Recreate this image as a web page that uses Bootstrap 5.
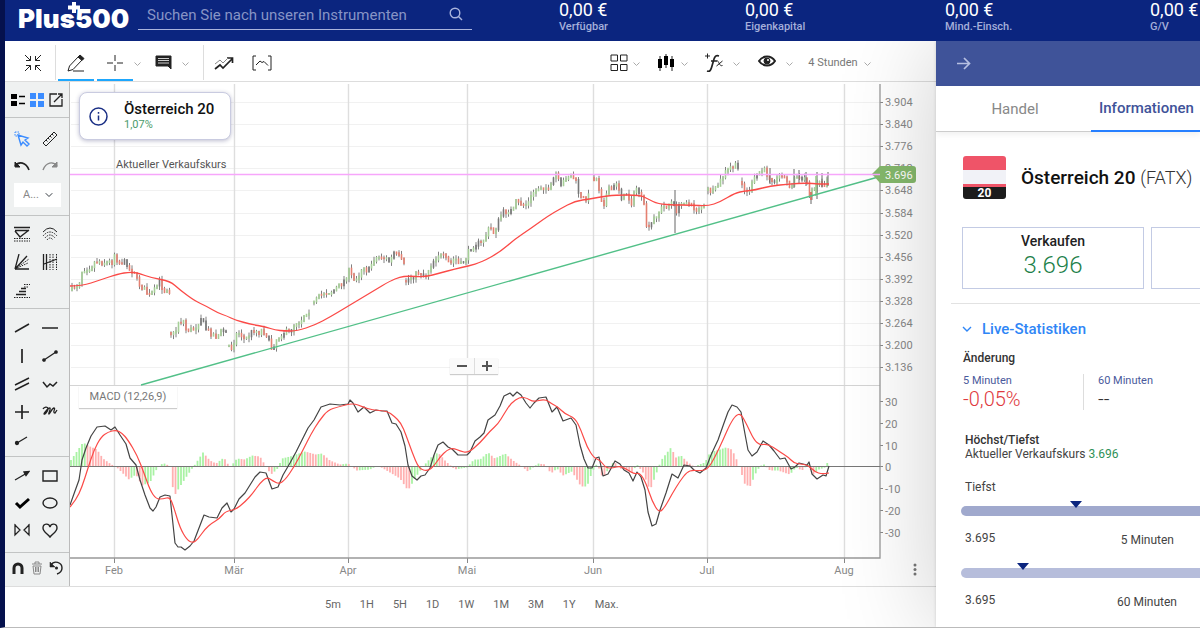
<!DOCTYPE html>
<html lang="de">
<head>
<meta charset="utf-8">
<meta name="viewport" content="width=device-width, initial-scale=1">
<title>Plus500 – Österreich 20</title>
<link href="https://cdn.jsdelivr.net/npm/bootstrap@5.3.0/dist/css/bootstrap.min.css" rel="stylesheet">
<style>
body{font-family:Roboto,"Liberation Sans",sans-serif;font-size:12px;line-height:16px;color:#444;background:#fff}
button,select,input{font-family:inherit}
.shell{border-left:5px solid #05114d;border-bottom:1px solid #bbb;min-height:100vh;overflow:hidden}
.topbar{background:#0b257f;height:41px}
.logo{width:133px;padding-left:13px;color:#fff;font:900 26px/38px Inter,Roboto,sans-serif;text-decoration:none;position:relative}
.logo svg{position:absolute;left:62px;top:2px}
.finder{flex:0 0 334px;height:30px;border-bottom:1px solid #aab4dd}
.finder input{background:none;border:0;outline:0;color:#fff;font-size:15px;padding:0 0 0 9px;height:30px;min-width:0}
.finder input::placeholder{color:#8794c6;opacity:1}
.finder button{width:33px;height:28px;color:#aab4dd}
.funds{display:grid;grid-template-columns:186fr 200fr 205fr 50fr;padding-left:87px;white-space:nowrap;overflow:hidden}
.funds strong{display:block;font-weight:400;font-size:18px;line-height:19px;color:#fff}
.funds span{display:block;font-size:11px;font-weight:500;line-height:15px;color:#a5afda}
.icb{background:none;border:0;padding:0;display:flex;align-items:center;justify-content:center;color:#222}
svg{fill:none}
svg:not([stroke]){stroke:currentColor}
.tools{height:41px;border-bottom:1px solid #ddd}
.tools .icb{height:43px;width:36px}
.tools .icb.on{box-shadow:inset 0 -3px #fff,0 2px #1ea7fd;height:38px;align-self:flex-start;padding-top:5px}
.tools .icb.chev{width:12px;color:#aaa;padding-top:4px}
.tools .icb.wide{width:40px}
.rule{width:1px;background:#ddd;height:35px;margin-top:4px}
.tools .interval{font-size:11px;color:#777;width:50px;white-space:nowrap}
.rail{width:65px;flex:none;background:#eff1f1;border-right:1px solid #bbb}
.rail section{padding:0 5px 0 3px;position:relative}
.rail section+section{border-top:1px solid #c2c4c4}
.pairs{display:grid;grid-template-columns:28px 28px;grid-auto-rows:28px}
.trio{display:grid;grid-template-columns:19px 19px 19px;height:35px}
.hue{display:block;margin:4px 0 8px 6px;width:47px;height:24px;border:0;border-radius:0;font-size:11px;color:#888;background-color:#fff;padding:0 18px 0 9px;background-size:8px;background-position:right 8px center;line-height:24px}
.plot{min-width:0}
.plot>svg{display:block;width:100%;height:auto}
.plot svg text{font-size:11px;fill:#888;stroke:none}
.asset{left:9px;top:10px;width:152px;height:48px;border:1px solid #c9cbe0;border-radius:8px;background:#fff;box-shadow:0 1px 4px rgba(40,40,100,.3)}
.asset b{font-size:15px;font-weight:500;color:#111;line-height:17px;white-space:nowrap}
.asset small{font-size:11px;line-height:13px;color:#4b9b6c}
.study{left:9px;top:304px;width:98px;height:22px;background:#fff;font-size:11px;line-height:21px;color:#777;text-align:center;box-shadow:0 1px 1px #ccc}
.zoomer{left:380px;top:276px;box-shadow:0 1px 1px #ccc;background:#fafafa}
.zoomer .icb{width:24px;height:16px;color:#555}
.zoomer .icb+.icb{border-left:1px solid #ddd}
.ranges{height:40px;border-top:1px solid #ddd;gap:19px;padding:0 0 4px 320px}
.ranges button{background:none;border:0;padding:0;font-size:11px;color:#666}
.side{width:264px;flex:none;background:#fff;position:relative;z-index:1;box-shadow:0 0 100px rgba(0,0,0,.2),0 0 3px rgba(0,0,0,.15);clip-path:inset(0 0 0 -130px)}
.side .inner{overflow:hidden}
.band{height:45px;background:#3f5399;padding-left:21px}
.band .icb{color:#b7c0e2}
.tabrow{height:46px;border-bottom:1px solid #ccc;box-shadow:0 3px 6px rgba(0,0,0,.06);white-space:nowrap}
.tabrow button{font-size:15px;color:#888;background:none;border:0;flex:0 0 155px;padding:0 0 0 3px}
.tabrow button.on{color:#3f5399;font-weight:500;border-bottom:2px solid #267fff;flex-basis:109px;height:46px;padding:0 0 0 8px;text-align:left}
.flag{width:43px;height:43px;border-radius:3px;overflow:hidden;background:linear-gradient(#ef5468 14px,#f1f2f7 14px 28px,#ef5468 28px 31px,#1c1c1c 31px);color:#fff;font-weight:700;font-size:12px;line-height:12px;padding-top:31px;text-align:center}
.name{font-size:19px;font-weight:500;color:#111;line-height:24px;white-space:nowrap}
.name span{font-weight:300;font-size:18px;color:#333}
.quote{flex:0 0 182px;height:62px;border:1px solid #c3cbe4;border-radius:0;background:#fff;padding:0 0 6px;text-align:center;font-weight:500;font-size:14px;color:#222;line-height:20px}
.quote span{display:block;font-weight:300;font-size:24px;line-height:28px;color:#1c8049}
.up{color:#2f9158}
.live{background:none;border:0;padding:0;color:#2f86f6;font-size:15px;font-weight:500;line-height:20px;gap:10px}
.head{font-size:12px;font-weight:500;color:#333;margin:0;line-height:14px}
.delta{font-size:11px;line-height:14px;color:#4a5a9c}
.delta span{display:block;font-size:20px;line-height:22px;font-weight:300;color:#e0393e}
.delta .flat{color:#333}
.track{height:10px;border-radius:5px 0 0 5px;background:#a0a9cd;position:relative;margin-left:25px}
.track.soft{background:#b6bddb}
.track i{position:absolute;top:-5px;margin-left:-6px;border:6px solid transparent;border-top:7px solid #0b257f;border-bottom:0}
.ends{padding:14px 0 0 29px;line-height:16px}
</style>
</head>
<body>
<div class="shell d-flex flex-column">
<header class="topbar d-flex">
  <a class="logo flex-shrink-0" href="#">Plus500<svg width="14" height="12" viewBox="0 0 14 12"><path d="M7 0v11M1 5.500h12" stroke="#fff" stroke-width="4"/></svg></a>
  <form class="finder d-flex">
    <input class="flex-grow-1" type="text" aria-label="Suche" placeholder="Suchen Sie nach unseren Instrumenten">
    <button type="button" class="icb" aria-label="Suchen"><svg width="14" height="14" viewBox="0 0 14 14" stroke-width="1.400"><circle cx="6" cy="6" r="4.800"/><path d="M9.500 9.500 13 13"/></svg></button>
  </form>
  <div class="funds flex-grow-1">
    <div><strong>0,00 €</strong><span>Verfügbar</span></div>
    <div><strong>0,00 €</strong><span>Eigenkapital</span></div>
    <div><strong>0,00 €</strong><span>Mind.-Einsch.</span></div>
    <div><strong>0,00 €</strong><span>G/V</span></div>
  </div>
</header>
<div class="d-flex flex-grow-1">
<main class="flex-grow-1 d-flex flex-column" style="min-width:0">
  <nav class="tools d-flex">
    <button class="icb" style="width:50px;padding-left:6px" aria-label="Verkleinern"><svg width="18" height="18" viewBox="0 0 18 18"><path d="M1 1l5.500 5.500M6.500 2v4.500H2M17 1l-5.500 5.500M11.500 2v4.500H16M1 17l5.500-5.500M6.500 16v-4.500H2M17 17l-5.500-5.500M11.500 16v-4.500H16"/></svg></button>
    <span class="rule"></span>
    <button class="icb on" style="margin:0 3px 0 2px" aria-label="Zeichnen"><svg width="18" height="18" viewBox="0 0 18 18"><path d="M1 17l1.500-5L12 2l3.500 3.500-9.500 10zM6 17h11"/><path d="M11 3l2-2 4 3.500-2 2z" fill="currentColor"/></svg></button>
    <button class="icb on" aria-label="Fadenkreuz"><svg width="16" height="16" viewBox="0 0 16 16"><path d="M8 0v6M8 10v6M0 8h6M10 8h6"/></svg></button>
    <button class="icb chev" style="margin-left:-2px" aria-label="Mehr"><svg width="7" height="5" viewBox="0 0 7 5"><path d="M.5.5l3 3 3-3"/></svg></button>
    <button class="icb wide" aria-label="Kommentar"><svg width="17" height="15" viewBox="0 0 17 15"><path d="M1 1h15v13l-3-3H1z" fill="currentColor"/><path d="M3 3.500h11M3 5.500h11M3 8h11" stroke="#ccc"/></svg></button>
    <button class="icb chev" style="margin:0 12px 0 -4px" aria-label="Mehr"><svg width="7" height="5" viewBox="0 0 7 5"><path d="M.5.5l3 3 3-3"/></svg></button>
    <span class="rule"></span>
    <button class="icb" style="width:40px" aria-label="Trend"><svg width="20" height="14" viewBox="0 0 20 14"><path d="M1 13l5-4 3 3 9-9M13 2h5.500v5" stroke-width="1.700"/><path d="M1 8l5-4 3 3 5-5" stroke="#888"/></svg></button>
    <button class="icb" aria-label="Bereich"><svg width="20" height="16" viewBox="0 0 20 16"><path d="M4 1H1v14h3M16 1h3v14h-3M4 10l4-4 2 1.500 2-1 4 4"/></svg></button>
    <div class="d-flex ms-auto" style="margin-right:63px">
      <button class="icb" style="width:26px" aria-label="Layout"><svg width="18" height="18" viewBox="0 0 18 18"><path d="M1 1h6.500v6H1zM10.500 1H17v6h-6.500zM1 10.500h6.500v6H1zM10.500 10.500H17v6h-6.500z"/></svg></button>
      <button class="icb chev" style="margin:0 12px 0 -2px" aria-label="Mehr"><svg width="7" height="5" viewBox="0 0 7 5"><path d="M.5.5l3 3 3-3"/></svg></button>
      <button class="icb" style="width:24px" aria-label="Kerzen"><svg width="18" height="17" viewBox="0 0 18 17"><path d="M3 2v15M9 0v14M15 2v15"/><path d="M3 5v9M9 2v9M15 5v8" stroke="#000" stroke-width="4"/></svg></button>
      <button class="icb chev" style="margin-right:10px" aria-label="Mehr"><svg width="7" height="5" viewBox="0 0 7 5"><path d="M.5.5l3 3 3-3"/></svg></button>
      <button class="icb" style="width:28px" aria-label="Indikatoren"><svg width="19" height="20" viewBox="0 0 19 20"><path d="M0 3h5M2.500 .5v5"/><path d="M2 18c3 1 4-1 5-5l2-7c1-3 2-4 5-3M6 8h6" stroke-width="1.700"/><path d="M12 8c2-1 2 6 5.500 4.500M17.500 8l-6 5"/></svg></button>
      <button class="icb chev" style="margin:0 11px 0 2px" aria-label="Mehr"><svg width="7" height="5" viewBox="0 0 7 5"><path d="M.5.5l3 3 3-3"/></svg></button>
      <button class="icb" style="width:28px;padding-bottom:3px" aria-label="Anzeigen"><svg width="18" height="12" viewBox="0 0 18 12"><path d="M1 6c4-6 12-6 16 0-4 6-12 6-16 0z" stroke-width="2"/><circle cx="9" cy="6" r="3" fill="currentColor"/><circle cx="10" cy="5" r="1" fill="#fff" stroke="none"/></svg></button>
      <button class="icb chev" style="margin:0 13px 0 2px" aria-label="Mehr"><svg width="7" height="5" viewBox="0 0 7 5"><path d="M.5.5l3 3 3-3"/></svg></button>
      <button class="icb interval">4 Stunden</button>
      <button class="icb chev" style="margin-left:3px" aria-label="Mehr"><svg width="7" height="5" viewBox="0 0 7 5"><path d="M.5.5l3 3 3-3"/></svg></button>
    </div>
  </nav>
  <div class="d-flex">
    <aside class="rail">
      <section><div class="trio">
        <button class="icb" aria-label="Liste"><svg width="14" height="14" viewBox="0 0 14 14" stroke="none"><path d="M0 1h6v5H0zM0 8h6v5H0z" fill="#000"/><path d="M8 3.500h6M8 10.500h6" stroke="#000" stroke-width="1.500"/></svg></button>
        <button class="icb" aria-label="Kacheln"><svg width="14" height="14" viewBox="0 0 14 14" stroke="none"><path d="M0 0h6v6H0zM8 0h6v6H8zM0 8h6v6H0zM8 8h6v6H8z" fill="#3b8cff"/></svg></button>
        <button class="icb" aria-label="Neues Fenster"><svg width="14" height="14" viewBox="0 0 14 14" stroke-width="1.300"><path d="M8 1H1v12h12V6M5 9l8-8M9 1h4v4"/></svg></button>
      </div></section>
      <section style="padding-top:7px">
        <div class="pairs" style="grid-auto-rows:27px">
        <button class="icb" aria-label="Auswahl" style="color:#3b8cff"><svg width="16" height="16" viewBox="0 0 16 16" stroke-width="1.400"><path d="M4 4l3 10 2-3 4 4 2-2-4-4 3-2z"/><path d="M1 1h4v4H1z" stroke-width="1" stroke-dasharray="1.500 1"/></svg></button>
        <button class="icb" aria-label="Lineal"><svg width="16" height="16" viewBox="0 0 16 16"><path d="M1 12L12 1l3 3L4 15zM4 9l1.500 1.500M6 7l1.500 1.500M8 5l1.500 1.500M10 3l1.500 1.500"/></svg></button>
        <button class="icb" aria-label="Rückgängig"><svg width="16" height="10" viewBox="0 0 16 10" stroke-width="1.600"><path d="M1 5c4-5 11-4 14 4"/><path d="M1 1v5h5z" fill="currentColor" stroke-width="1"/></svg></button>
        <button class="icb" aria-label="Wiederholen" style="color:#888"><svg width="16" height="10" viewBox="0 0 16 10" stroke-width="1.400"><path d="M15 5C11 0 4 1 1 9"/><path d="M15 1v5h-5z" fill="currentColor" stroke-width="1"/></svg></button>
        </div>
        <select class="form-select hue" aria-label="Auswahl"><option>A...</option></select>
      </section>
      <section class="pairs pt-1 pb-1">
        <button class="icb" aria-label="Retracement"><svg width="16" height="16" viewBox="0 0 16 16"><path d="M0 1.500h16M1 4.500h14M1 5l5 6 9-7" stroke-width="1.400"/><path d="M0 12.500h16M0 15h16" stroke-dasharray="1.500 1"/></svg></button>
        <button class="icb" aria-label="Bögen"><svg width="16" height="14" viewBox="0 0 16 14"><path d="M1 5q7-8 14 0"/><path d="M1 9q7-8 14 0M3 11q5-6 10 0M5 13q3-4 6 0" stroke-dasharray="1.500 1"/></svg></button>
        <button class="icb" aria-label="Fächer"><svg width="16" height="16" viewBox="0 0 16 16"><path d="M1 15L5 0M1 15L13 2M1 15h14" stroke-width="1.300"/><path d="M1 15L15 5M1 15l13-6" stroke-dasharray="1.500 1"/></svg></button>
        <button class="icb" aria-label="Zeitzonen"><svg width="16" height="16" viewBox="0 0 16 16"><path d="M1.500 0v16M4.500 0v16M2 10l13-5" stroke-width="1.300"/><path d="M8 0v16M11 0v16M14.500 0v16" stroke-dasharray="1.500 1"/></svg></button>
        <button class="icb" aria-label="Projektion"><svg width="16" height="15" viewBox="0 0 16 15"><path d="M7 5.500h5M5 8.500h7M2 11.500h10" stroke-width="1.500"/><path d="M10 1.500h6M0 14.500h16M10 4h5" stroke-dasharray="1.500 1"/></svg></button>
      </section>
      <section class="pairs" style="padding-top:5px;padding-bottom:2px">
        <button class="icb" aria-label="Linie"><svg width="16" height="16" viewBox="0 0 16 16" stroke-width="1.500"><path d="M1 12L15 4"/></svg></button>
        <button class="icb" aria-label="Horizontale"><svg width="16" height="16" viewBox="0 0 16 16" stroke-width="1.500"><path d="M0 8h16"/></svg></button>
        <button class="icb" aria-label="Vertikale"><svg width="16" height="16" viewBox="0 0 16 16" stroke-width="1.700"><path d="M8 1v14"/></svg></button>
        <button class="icb" aria-label="Segment"><svg width="16" height="16" viewBox="0 0 16 16" stroke-width="1.300"><path d="M2 12L14 4"/><circle cx="2" cy="12" r="1.200" fill="currentColor"/><circle cx="14" cy="4" r="1.200" fill="currentColor"/></svg></button>
        <button class="icb" aria-label="Kanal"><svg width="16" height="16" viewBox="0 0 16 16" stroke-width="1.400"><path d="M1 9L15 2M1 14L15 7"/></svg></button>
        <button class="icb" aria-label="Welle"><svg width="16" height="16" viewBox="0 0 16 16" stroke-width="1.500"><path d="M1 6l4 5 3-3 3 2 4-4"/></svg></button>
        <button class="icb" aria-label="Kreuz"><svg width="16" height="16" viewBox="0 0 16 16" stroke-width="1.700"><path d="M8 1v14M1 8h14"/></svg></button>
        <button class="icb" aria-label="Freihand"><svg width="16" height="14" viewBox="0 0 16 14" stroke-width="1.300"><path d="M1 4c1-2 5-3 5 0S2 10 2 9s5-7 6-6-2 6-1 6 3-6 5-6-2 5 1 5l2-3"/></svg></button>
        <button class="icb" aria-label="Strahl"><svg width="16" height="16" viewBox="0 0 16 16" stroke-width="1.300"><path d="M3 11l10-6"/><circle cx="3" cy="11" r="1.500" fill="currentColor"/></svg></button>
      </section>
      <section class="pairs" style="grid-auto-rows:27px;padding-top:5px;padding-bottom:9px">
        <button class="icb" aria-label="Pfeil"><svg width="16" height="16" viewBox="0 0 16 16" stroke-width="1.300"><path d="M1 12l12-7"/><path d="M10 4l5-.5-3 4z" fill="currentColor"/></svg></button>
        <button class="icb" aria-label="Rechteck"><svg width="16" height="16" viewBox="0 0 16 16" stroke-width="1.400"><path d="M1 3h14v10H1z"/></svg></button>
        <button class="icb" aria-label="Haken"><svg width="16" height="16" viewBox="0 0 16 16" stroke="#000" stroke-width="3"><path d="M2 8l4 4 9-8"/></svg></button>
        <button class="icb" aria-label="Ellipse"><svg width="16" height="16" viewBox="0 0 16 16" stroke-width="1.400"><ellipse cx="8" cy="8" rx="7" ry="5"/></svg></button>
        <button class="icb" aria-label="Muster"><svg width="16" height="14" viewBox="0 0 16 14" stroke-width="1.300"><path d="M1 2v10l5-5zM15 2v10l-5-5zM1 1v12M15 1v12"/></svg></button>
        <button class="icb" aria-label="Herz"><svg width="16" height="16" viewBox="0 0 16 16" stroke-width="1.400"><path d="M8 15C6 12 1 10 1 6 1 1 7 1 8 5c1-4 7-4 7 1 0 4-5 6-7 9z"/></svg></button>
      </section>
      <section><div class="trio" style="height:30px">
        <button class="icb" aria-label="Magnet"><svg width="14" height="14" viewBox="0 0 14 14" stroke-width="3"><path d="M3 13V7a4 4 0 018 0v6"/></svg></button>
        <button class="icb" aria-label="Löschen" style="color:#888"><svg width="12" height="14" viewBox="0 0 12 14"><path d="M1 3h10M4 3V1h4v2M2 5l1 8h6l1-8zM4.500 6v5M6 6v5M7.500 6v5"/></svg></button>
        <button class="icb" aria-label="Zurücksetzen"><svg width="14" height="14" viewBox="0 0 14 14" stroke-width="1.400"><path d="M2 4c3-5 11-3 11 3 0 3-2 5-5 6"/><path d="M1 1v5h5z" fill="currentColor" stroke-width=".5"/><circle cx="7.500" cy="7" r=".8" fill="currentColor"/></svg></button>
      </div></section>
    </aside>
    <div class="plot flex-grow-1 position-relative">
      <svg id="chart" viewBox="70 82 866 504" role="img" aria-label="Kursverlauf Österreich 20">
        <g id="grid"></g><g id="hist"></g><g id="candles"></g><g id="curves" stroke-linejoin="round"></g>
        <path d="M70 174.500H880" stroke="#f7a6fb" stroke-width="1.500"/>
        <text x="116" y="168" style="fill:#555">Aktueller Verkaufskurs</text>
        <path d="M872 174l8-8h33q3 0 3 3v11q0 3-3 3h-33z" fill="#85b96c" stroke="none"/>
        <path d="M872 174.500H880" stroke="#f7a6fb" stroke-width="1.500"/>
        <text x="885" y="179" style="fill:#fff">3.696</text>
        <g fill="#777" stroke="none"><circle cx="915" cy="565" r="1.500"/><circle cx="915" cy="569.500" r="1.500"/><circle cx="915" cy="574" r="1.500"/></g>
      </svg>
      <div class="asset position-absolute d-flex align-items-center">
        <svg class="flex-shrink-0" style="margin:0 16px 0 9px" width="19" height="19" viewBox="0 0 19 19" stroke="#1a2f85" stroke-width="1.500"><circle cx="9.500" cy="9.500" r="8.500"/><path d="M9.500 8.500v5M9.500 5v1.700"/></svg>
        <div class="d-flex flex-column"><b>Österreich 20</b><small>1,07%</small></div>
      </div>
      <div class="study position-absolute">MACD (12,26,9)</div>
      <div class="zoomer position-absolute d-flex">
        <button class="icb" aria-label="Herauszoomen"><svg width="10" height="10" viewBox="0 0 10 10" stroke-width="2"><path d="M0 5h10"/></svg></button>
        <button class="icb" aria-label="Hineinzoomen"><svg width="10" height="10" viewBox="0 0 10 10" stroke-width="2"><path d="M0 5h10M5 0v10"/></svg></button>
      </div>
    </div>
  </div>
  <div class="ranges d-flex align-items-center flex-grow-1">
    <button>5m</button><button>1H</button><button>5H</button><button>1D</button><button>1W</button><button>1M</button><button>3M</button><button>1Y</button><button>Max.</button>
  </div>
</main>
<aside class="side"><div class="inner">
  <div class="band d-flex align-items-center"><button class="icb" aria-label="Schließen"><svg width="14" height="13" viewBox="0 0 14 13" stroke-width="1.700"><path d="M0 6.500h12M7 1l5.500 5.500L7 12"/></svg></button></div>
  <div class="tabrow d-flex"><button>Handel</button><button class="on">Informationen</button></div>
  <div class="d-flex align-items-center" style="padding:24px 0 0 27px;gap:15px"><div class="flag">20</div><div class="name">Österreich 20 <span>(FATX)</span></div></div>
  <div class="d-flex" style="padding:28px 0 0 26px;gap:7px"><button class="quote">Verkaufen<span>3.696</span></button><button class="quote" aria-label="Kaufen"></button></div>
  <div style="border-top:1px solid #e2e2e2;margin:14px 0 0 15px"></div>
  <button class="live d-flex align-items-center" style="margin:15px 0 0 26px"><svg width="10" height="6" viewBox="0 0 10 6" stroke-width="1.400"><path d="M1 1l4 4 4-4"/></svg>Live-Statistiken</button>
  <h2 class="head" style="margin:12px 0 0 27px">Änderung</h2>
  <div class="d-flex" style="margin:9px 0 0 27px"><div class="delta" style="width:121px;border-right:1px solid #ddd">5 Minuten<span>-0,05%</span></div><div class="delta" style="padding-left:14px">60 Minuten<span class="flat">--</span></div></div>
  <h2 class="head" style="margin:23px 0 0 29px">Höchst/Tiefst</h2>
  <div style="margin-left:29px;line-height:14px">Aktueller Verkaufskurs <span class="up">3.696</span></div>
  <div style="margin:18px 0 11px 29px">Tiefst</div>
  <div class="track"><i style="left:48%"></i></div>
  <div class="ends d-flex"><span>3.695</span><span class="ms-auto" style="padding:2px 26px 0 0">5 Minuten</span></div>
  <div class="track soft" style="margin-top:20px"><i style="left:26%"></i></div>
  <div class="ends d-flex"><span>3.695</span><span class="ms-auto" style="padding:2px 23px 0 0">60 Minuten</span></div>
</div></aside>
</div>
</div>
<script>
// Points are x,y pairs in chart units.
const price='72,290 75,286 79,285 81,272 86,269 90,268 94,263 98,261 104,263 110,262 113,262 115,252 118,263 124,262 128,264 130,272 134,270 138,283 144,289 149,296 155,290 159,281 164,291 168,288 170,292|171,333 175,335 178,322 184,321 185,329 192,330 196,327 201,318 206,329 212,334 217,337 222,330 227,333|229,346 232,348 236,335 240,333 245,340 250,334 254,330 258,333 262,330 268,336 270,348 273,348 276,340 282,334 286,332 291,331 295,323 301,321 305,313 311,311|314,303 319,297 324,293 332,292 338,287 344,281 349,271 354,280 360,274 363,265 368,272 374,259 380,257 385,258 390,262 394,253 400,258 404,265|406,281 412,277 420,272 425,277 432,263 438,255 444,257 450,264 455,258 460,266 466,258 470,249 476,244 482,243 487,233 490,227 494,233 497,225 502,213 508,211 513,211 516,202 524,205 528,204 533,193 540,187 545,187 549,192 553,180 556,174 561,187 566,177 572,175 576,182 580,198 585,199 590,195|594,178 598,180 600,197 604,203 608,190 613,189 617,182 622,199 627,193 631,204 636,188 640,193 645,210 647,230 650,228 653,220 658,213 662,208 668,205 673,202 675,212 680,206 685,200 690,205 696,210 700,207 706,207|708,190 714,192 720,182 725,173 730,168 736,166 740,172|742,182 744,190 748,193 754,180 758,173 764,170 770,178 776,180 782,174 788,184 792,187 795,176 800,180 806,178 810,196 815,185 820,182 824,187 828,176';
const average='70,286 82,286 100,280 118,274 130,272 138,273 152,278 170,281 180,290 195,301 206,306 218,313 227,316 235,320 250,324 266,327 275,330 285,331 297,331 315,325 330,317 345,308 360,299 375,290 390,281 400,277 408,276 425,277 440,273 455,269 468,266 482,262 500,252 515,239 530,229 548,216 560,209 575,201 590,199 600,197 615,195 640,195 648,199 658,204 675,205 690,205 708,206 720,202 735,193 745,191 755,190 770,186 790,184 805,183 820,184 829,184';
const macd='70,505 75,491 79,480 82,460 86,448 91,436 97,427 105,426 111,430 115,427 120,435 126,444 130,458 136,465 140,480 145,495 150,508 153,511 156,507 160,497 165,495 170,496 172,515 175,543 178,547 181,547 185,550 190,546 194,541 199,528 204,515 209,517 217,518 222,508 227,503 231,512 234,509 239,499 245,493 250,485 255,477 260,472 266,473 272,489 278,487 283,475 290,463 296,452 302,440 308,428 314,420 321,407 330,404 340,405 348,404 350,400 353,403 358,412 364,407 370,413 376,410 382,411 387,411 392,423 396,424 401,432 405,446 408,465 412,476 417,480 421,476 425,475 430,468 434,455 438,445 443,442 448,447 452,449 458,455 467,455 470,452 475,441 480,437 484,433 488,420 495,415 500,406 504,396 510,393 513,396 517,392 521,395 526,403 530,408 534,403 539,398 546,397 552,412 557,407 563,421 571,418 576,425 580,445 584,459 588,468 592,468 596,458 599,457 603,476 608,474 615,461 620,464 624,470 629,473 633,481 637,472 641,477 645,490 648,512 652,526 656,524 660,510 666,493 672,474 678,478 684,465 690,466 694,470 700,473 706,468 711,455 718,440 724,423 728,412 732,405 737,407 741,412 745,434 748,450 752,456 757,452 763,441 769,445 774,451 780,459 785,458 791,469 795,467 799,463 807,465 809,462 812,474 817,479 823,475 826,476 829,466';
const signal='70,507 76,500 82,487 88,468 94,450 101,437 108,432 116,430 122,433 128,440 137,455 144,473 150,490 156,499 163,499 170,497 174,508 180,528 187,540 193,543 198,539 205,529 212,523 219,519 226,511 235,510 245,502 253,493 260,483 267,477 273,481 279,484 285,480 294,467 303,450 311,434 319,421 328,410 338,407 353,403 363,407 372,410 387,411 394,416 401,423 406,435 412,452 419,469 428,471 434,466 440,457 447,450 453,448 460,451 468,453 480,443 490,431 498,424 504,414 511,403 520,397 527,398 533,402 545,399 552,404 558,407 565,414 575,418 581,430 587,447 594,458 600,460 606,468 613,468 620,466 628,470 634,474 640,473 646,483 652,501 659,513 665,507 672,494 680,481 687,472 693,470 700,471 708,469 715,457 723,440 730,424 736,415 741,414 747,425 754,440 760,445 766,444 773,447 780,452 788,457 794,463 800,464 808,465 815,472 822,474 829,473';
const bars='70,5 83,24 90,20 97,17 103,8 110,3 118,-2 129,-13 136,-8 142,-19 150,-16 156,-4 160,2 165,3 170,0 174,-30 180,-20 188,-8 195,2 203,14 210,6 216,3 224,9 230,-1 237,8 245,7 252,11 260,10 266,0 271,-8 277,-3 282,8 290,10 305,15 316,12 322,13 330,6 340,2 348,3 357,-4 370,-3 378,1 390,-6 400,-12 408,-24 415,-12 423,0 431,9 438,14 446,5 455,-3 467,-1 474,7 480,7 488,14 495,8 505,13 513,6 522,0 528,-5 538,3 545,2 551,-7 557,-2 563,-9 572,-5 581,-20 587,-20 592,-6 597,3 603,-12 610,0 614,5 620,-2 632,-6 637,2 643,-6 650,-24 656,-8 661,6 671,19 676,9 681,11 688,4 694,0 705,4 710,14 726,19 732,17 738,4 745,-18 750,-20 757,-4 763,3 770,-4 778,-4 790,-8 796,-1 802,-4 808,2 813,-8 819,-3 825,-1 829,7';
const pts=s=>s.split(' ').map(p=>p.split(',').map(Number));
const put=(id,html)=>document.getElementById(id).innerHTML=html;
const line=(d,c,w=1)=>`<path d="${d}" stroke="${c}" stroke-width="${w}"/>`;
const at=(p,x)=>{let i=1;while(i<p.length-1&&p[i][0]<x)i++;const[a,b]=p[i-1],[c,d]=p[i];return b+(d-b)*(x-a)/(c-a)};

// Grid, axes and their labels
let g='';
['3.904','3.840','3.776','3.712','3.648','3.584','3.520','3.456','3.392','3.328','3.264','3.200','3.136'].forEach((t,i)=>{
  const y=Math.round(102+i*22.1);
  g+=line(`M71 ${y+.5}H880`,'#f1f1f1')+line(`M880 ${y+.5}h3`,'#888')+`<text x="885" y="${y+4}">${t}</text>`});
[['Feb',114],['Mär',234],['Apr',348],['Mai',467],['Jun',593],['Jul',707],['Aug',844]].forEach(([t,x])=>{
  g+=line(`M${x+.5} 84V558`,'#dedede',1.4)+line(`M${x+.5} 558v5`,'#888')+`<text x="${x}" y="574" text-anchor="middle">${t}</text>`});
[30,20,10,0,-10,-20,-30].forEach((v,i)=>{const y=Math.round(402+i*21.8);
  g+=line(`M880 ${y-.5}h3`,'#888')+`<text x="885" y="${y+4}">${v}</text>`});
g+=line('M70 385.500H880','#d4d4d4')+line('M70 558H880V84','#999',1.3);
put('grid',g);

// Histogram: green while the value climbs, red while it falls
const hb=pts(bars);let h='',last=0;
for(let x=71;x<830;x+=2.75){const v=at(hb,x);h+=line(`M${x} 466.500v${-v}`,v>=last?'#a9f2a4':'#ffb0b0',1.8);last=v}
put('hist',h);

// Candles
let seed=7;const rnd=()=>(seed=seed*16807%2147483647)/2147483647;
let c='';
price.split('|').forEach(run=>{const p=pts(run);let open=p[0][1];
  for(let x=p[0][0];x<=p[p.length-1][0];x+=2.5){
    const close=at(p,x)+(rnd()-.5)*5,hi=Math.min(open,close)-rnd()*5,lo=Math.max(open,close)+rnd()*5;
    const tone=rnd()<.15?'#777':close<open?'#a6cf97':'#e58071';
    c+=line(`M${x} ${hi}V${lo}`,'#808080',1)+line(`M${x} ${Math.min(open,close)-1}V${Math.max(open,close)+1}`,tone,1.6);open=close}});
c+=line('M675 190V233M770 168V184M794 169V188M799 170V184M806 172V186M811 192V204M817 172V199M822 173V187M828 172V186','#666')+line('M811 192V200','#e2705f',1.6)+line('M816 176V196','#9ccb8b',1.6);
put('candles',c);

const path=s=>'M'+s.replace(/ /g,'L');
const smooth=s=>{const p=pts(s);let d=`M${p[0]}`;for(let i=1;i<p.length-1;i++)d+=`Q${p[i]} ${(p[i][0]+p[i+1][0])/2},${(p[i][1]+p[i+1][1])/2}`;return d+`L${p[p.length-1]}`};
put('curves',line('M70 466.500H880','#777')+line('M141 385L880 176.500','#52c088',1.4)+line(smooth(average),'#fb4a47',1.3)
  +line(path(macd),'#444',1.2)+line(smooth(signal),'#fb4a47',1.2));
</script>
</body>
</html>
